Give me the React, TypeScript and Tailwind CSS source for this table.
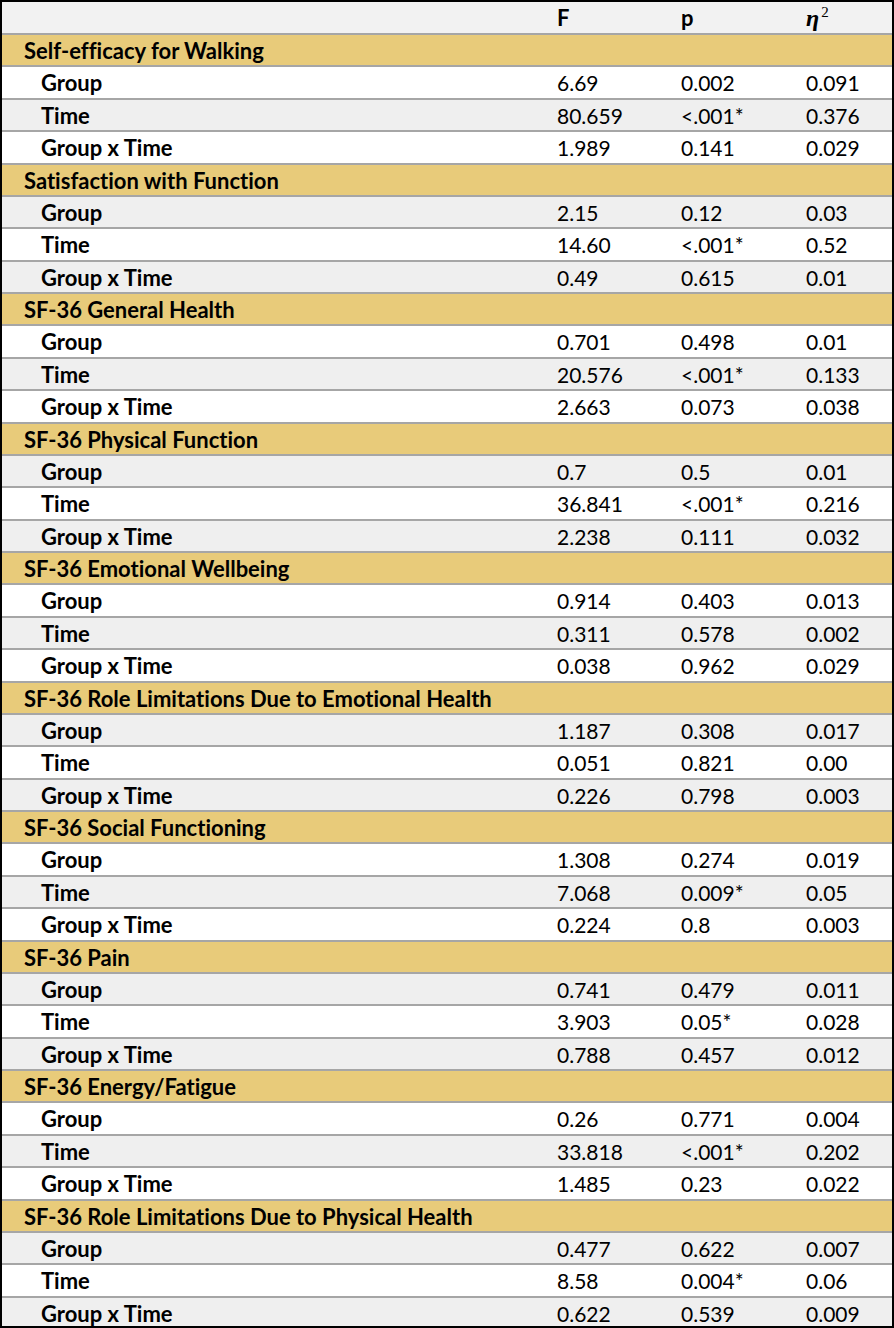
const sections: { title: string; rows: [string, string, string, string][] }[] = [
  {
    title: "Self-efficacy for Walking",
    rows: [
      ["Group", "6.69", "0.002", "0.091"],
      ["Time", "80.659", "<.001*", "0.376"],
      ["Group x Time", "1.989", "0.141", "0.029"],
    ],
  },
  {
    title: "Satisfaction with Function",
    rows: [
      ["Group", "2.15", "0.12", "0.03"],
      ["Time", "14.60", "<.001*", "0.52"],
      ["Group x Time", "0.49", "0.615", "0.01"],
    ],
  },
  {
    title: "SF-36 General Health",
    rows: [
      ["Group", "0.701", "0.498", "0.01"],
      ["Time", "20.576", "<.001*", "0.133"],
      ["Group x Time", "2.663", "0.073", "0.038"],
    ],
  },
  {
    title: "SF-36 Physical Function",
    rows: [
      ["Group", "0.7", "0.5", "0.01"],
      ["Time", "36.841", "<.001*", "0.216"],
      ["Group x Time", "2.238", "0.111", "0.032"],
    ],
  },
  {
    title: "SF-36 Emotional Wellbeing",
    rows: [
      ["Group", "0.914", "0.403", "0.013"],
      ["Time", "0.311", "0.578", "0.002"],
      ["Group x Time", "0.038", "0.962", "0.029"],
    ],
  },
  {
    title: "SF-36 Role Limitations Due to Emotional Health",
    rows: [
      ["Group", "1.187", "0.308", "0.017"],
      ["Time", "0.051", "0.821", "0.00"],
      ["Group x Time", "0.226", "0.798", "0.003"],
    ],
  },
  {
    title: "SF-36 Social Functioning",
    rows: [
      ["Group", "1.308", "0.274", "0.019"],
      ["Time", "7.068", "0.009*", "0.05"],
      ["Group x Time", "0.224", "0.8", "0.003"],
    ],
  },
  {
    title: "SF-36 Pain",
    rows: [
      ["Group", "0.741", "0.479", "0.011"],
      ["Time", "3.903", "0.05*", "0.028"],
      ["Group x Time", "0.788", "0.457", "0.012"],
    ],
  },
  {
    title: "SF-36 Energy/Fatigue",
    rows: [
      ["Group", "0.26", "0.771", "0.004"],
      ["Time", "33.818", "<.001*", "0.202"],
      ["Group x Time", "1.485", "0.23", "0.022"],
    ],
  },
  {
    title: "SF-36 Role Limitations Due to Physical Health",
    rows: [
      ["Group", "0.477", "0.622", "0.007"],
      ["Time", "8.58", "0.004*", "0.06"],
      ["Group x Time", "0.622", "0.539", "0.009"],
    ],
  },
];

const rowBase =
  "grid grid-cols-[555px_124px_125px_1fr] items-baseline h-[32.38px] shrink-0 border-b-2 border-[#a6a6a6] pt-[4px] leading-[24px]";

export default function App() {
  let stripe = 0;
  return (
    <div className="w-[894px] h-[1328px] overflow-hidden border-2 border-black bg-white flex flex-col font-['Lato',sans-serif] text-[21px] text-black [font-variant-ligatures:none]">
      <div className={`${rowBase} h-[33px] bg-[#f2f2f2] font-bold text-[22px]`}>
        <div />
        <div>F</div>
        <div>p</div>
        <div className="whitespace-nowrap">
          <span className="font-['Liberation_Serif',serif] italic text-[24px]">η</span>
          <span className="relative -top-[9px] ml-[2px] font-['Liberation_Serif',serif] font-normal text-[15px]">2</span>
        </div>
      </div>
      {sections.map((section) => (
        <div key={section.title} className="contents">
          <div className={`${rowBase} bg-[#e8cb7a] font-bold text-[22px]`}>
            <div className="pl-[22px] col-span-4 whitespace-nowrap">{section.title}</div>
          </div>
          {section.rows.map((row) => {
            const bg = stripe++ % 2 === 0 ? "bg-white" : "bg-[#efefef]";
            return (
              <div key={section.title + row[0]} className={`${rowBase} ${bg}`}>
                <div className="pl-[39px] font-bold text-[22px]">{row[0]}</div>
                <div>{row[1]}</div>
                <div>{row[2]}</div>
                <div>{row[3]}</div>
              </div>
            );
          })}
        </div>
      ))}
    </div>
  );
}
